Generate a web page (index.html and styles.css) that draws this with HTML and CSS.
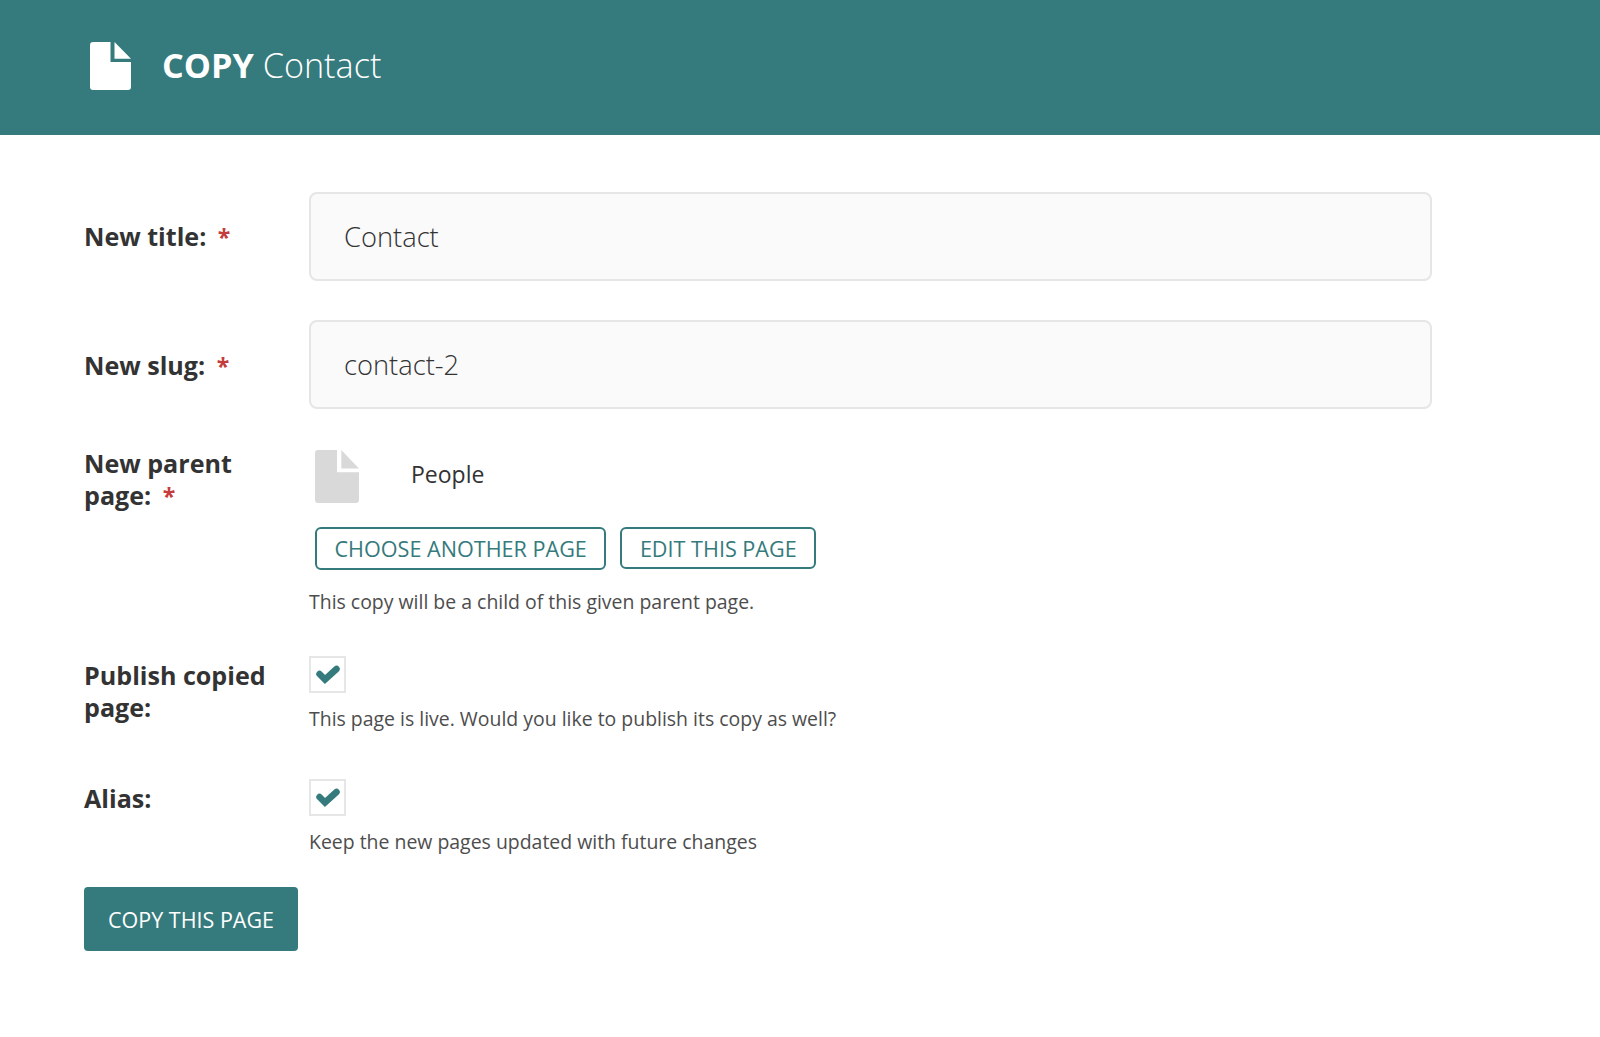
FILE: index.html
```html
<!DOCTYPE html>
<html lang="en">
<head>
    <meta charset="UTF-8">
    <title>Copy Contact</title>
    <link rel="stylesheet" href="styles.css">
</head>
<body>

    <header class="page-header">
        <svg class="header-icon" viewBox="0 0 41 49" width="41" height="48" preserveAspectRatio="none">
            <path d="M3 0H20.5V20.5H41V46a3 3 0 0 1-3 3H3a3 3 0 0 1-3-3V3a3 3 0 0 1 3-3z"/>
            <path d="M24.5 0L41 17H24.5z"/>
        </svg>
        <h1><strong>COPY</strong> Contact</h1>
    </header>

    <form class="copy-form">
        <div class="field field-text">
            <label class="field-label" for="new_title">New title: <span class="required">*</span></label>
            <input class="text-input" id="new_title" type="text" value="Contact">
        </div>

        <div class="field field-text field-slug">
            <label class="field-label" for="new_slug">New slug: <span class="required">*</span></label>
            <input class="text-input" id="new_slug" type="text" value="contact-2">
        </div>

        <div class="field field-parent">
            <label class="field-label">New parent page: <span class="required">*</span></label>
            <div class="field-content">
                <div class="chosen-page">
                    <svg class="page-icon" viewBox="0 0 41 49" width="44" height="53" preserveAspectRatio="none">
                        <path d="M3 0H20.5V20.5H41V46a3 3 0 0 1-3 3H3a3 3 0 0 1-3-3V3a3 3 0 0 1 3-3z"/>
                        <path d="M24.5 0L41 17H24.5z"/>
                    </svg>
                    <span class="page-title">People</span>
                </div>
                <div class="chooser-buttons">
                    <button type="button" class="btn-outline btn-choose">CHOOSE ANOTHER PAGE</button>
                    <button type="button" class="btn-outline">EDIT THIS PAGE</button>
                </div>
                <p class="help">This copy will be a child of this given parent page.</p>
            </div>
        </div>

        <div class="field field-check">
            <label class="field-label">Publish copied page:</label>
            <div class="field-content">
                <span class="checkbox">
                    <svg viewBox="0 0 24 20" width="24" height="20"><path d="M3.5 9L9 14.5L20.5 4"/></svg>
                </span>
                <p class="help">This page is live. Would you like to publish its copy as well?</p>
            </div>
        </div>

        <div class="field field-check field-alias">
            <label class="field-label">Alias:</label>
            <div class="field-content">
                <span class="checkbox">
                    <svg viewBox="0 0 24 20" width="24" height="20"><path d="M3.5 9L9 14.5L20.5 4"/></svg>
                </span>
                <p class="help">Keep the new pages updated with future changes</p>
            </div>
        </div>

        <button type="submit" class="btn-submit">COPY THIS PAGE</button>
    </form>

</body>
</html>
```

FILE: styles.css
```css
body {
    margin: 0;
    font-family: 'Open Sans', sans-serif;
    background-color: white;
    color: #333;
}

.page-header {
    display: flex;
    align-items: center;
    height: 135px;
    padding-left: 90px;
    background-color: #357a7c;
    color: white;
}

.header-icon {
    fill: white;
    margin-top: -4px;
    margin-right: 31px;
}

h1 {
    margin: 0 0 6px;
    font-size: 34.2px;
    font-weight: 300;
}

h1 strong {
    font-weight: 700;
}

.copy-form {
    padding: 57px 0 0 84px;
}

.field {
    display: flex;
}

.field-label {
    flex: none;
    box-sizing: border-box;
    width: 225px;
    padding-right: 30px;
    font-size: 25.1px;
    font-weight: 700;
    line-height: 32px;
}

.field-content {
    flex: 1;
}

.required {
    margin-left: 5px;
    font-size: 23px;
    color: #c43c3c;
}

.field-text {
    width: 1348px;
    margin-bottom: 39px;
}

.field-text .field-label {
    padding-top: 28px;
}

.field-slug .field-label {
    padding-top: 29px;
}

.text-input {
    flex: 1;
    min-width: 0;
    height: 89px;
    box-sizing: border-box;
    padding: 0 33px;
    border: 2px solid #e6e6e6;
    border-radius: 8px;
    background-color: #fafafa;
    font-family: 'Open Sans', sans-serif;
    font-size: 27.3px;
    font-weight: 300;
    color: #333;
}

.chosen-page {
    display: flex;
    align-items: flex-start;
    padding: 2px 0 0 6px;
}

.page-icon {
    fill: #d9d9d9;
    margin-right: 52px;
}

.page-title {
    margin-top: 8px;
    font-size: 23px;
    line-height: 32px;
}

.chooser-buttons {
    display: flex;
    align-items: flex-start;
    gap: 14px;
    margin: 24px 0 0 6px;
}

.btn-outline {
    height: 42px;
    padding: 0 17.5px;
    border: 2px solid #357a7c;
    border-radius: 6px;
    background-color: white;
    color: #357a7c;
    font-family: 'Open Sans', sans-serif;
    font-size: 21.6px;
    white-space: nowrap;
}

.btn-choose {
    height: 43px;
}

.help {
    margin: 0;
    font-size: 19.45px;
    line-height: 28px;
    color: #4d4d4d;
}

.field-parent .help {
    margin-top: 18px;
}

.field-parent {
    margin-bottom: 40px;
}

.field-parent .field-label {
    margin-top: -1px;
}

.checkbox {
    display: flex;
    align-items: center;
    justify-content: center;
    width: 37px;
    height: 37px;
    box-sizing: border-box;
    border: 2px solid #e6e6e6;
}

.checkbox svg {
    fill: none;
    stroke: #357a7c;
    stroke-width: 6.5;
    stroke-linecap: round;
}

.field-check .help {
    margin-top: 12px;
}

.field-check {
    margin-bottom: 46px;
}

.field-check .field-label {
    padding-top: 3px;
}

.field-alias {
    margin-bottom: 31px;
}

.btn-submit {
    display: block;
    width: 214px;
    height: 64px;
    padding: 0;
    border: none;
    border-radius: 4px;
    background-color: #357a7c;
    color: white;
    font-family: 'Open Sans', sans-serif;
    font-size: 21.5px;
}
```
